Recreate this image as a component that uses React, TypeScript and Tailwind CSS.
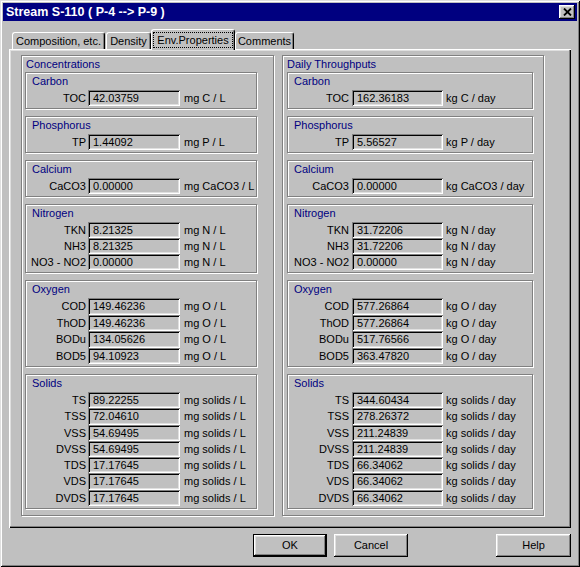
import React from "react";

type Row = { label: string; value: string };
type Section = { title: string; unit: string; rowH: string; rows: Row[] };

const raised =
	"shadow-[inset_-1px_-1px_0_#000,inset_1px_1px_0_#fff,inset_-2px_-2px_0_#808080,inset_2px_2px_0_#dfdfdf]";
const sunken =
	"shadow-[inset_1px_1px_0_#808080,inset_-1px_-1px_0_#fff,inset_2px_2px_0_#000,inset_-2px_-2px_0_#dfdfdf]";
const etched = "border border-[#808080] shadow-[inset_1px_1px_0_#fff,1px_1px_0_#fff]";

const concentrations: Section[] = [
	{ title: "Carbon", unit: "mg C / L", rowH: "h-[16px]", rows: [{ label: "TOC", value: "42.03759" }] },
	{ title: "Phosphorus", unit: "mg P / L", rowH: "h-[16px]", rows: [{ label: "TP", value: "1.44092" }] },
	{ title: "Calcium", unit: "mg CaCO3 / L", rowH: "h-[16px]", rows: [{ label: "CaCO3", value: "0.00000" }] },
	{
		title: "Nitrogen",
		unit: "mg N / L",
		rowH: "h-[16px]",
		rows: [
			{ label: "TKN", value: "8.21325" },
			{ label: "NH3", value: "8.21325" },
			{ label: "NO3 - NO2", value: "0.00000" },
		],
	},
	{
		title: "Oxygen",
		unit: "mg O / L",
		rowH: "h-[16.5px]",
		rows: [
			{ label: "COD", value: "149.46236" },
			{ label: "ThOD", value: "149.46236" },
			{ label: "BODu", value: "134.05626" },
			{ label: "BOD5", value: "94.10923" },
		],
	},
	{
		title: "Solids",
		unit: "mg solids / L",
		rowH: "h-[16.3px]",
		rows: [
			{ label: "TS", value: "89.22255" },
			{ label: "TSS", value: "72.04610" },
			{ label: "VSS", value: "54.69495" },
			{ label: "DVSS", value: "54.69495" },
			{ label: "TDS", value: "17.17645" },
			{ label: "VDS", value: "17.17645" },
			{ label: "DVDS", value: "17.17645" },
		],
	},
];

const throughputs: Section[] = [
	{ title: "Carbon", unit: "kg C / day", rowH: "h-[16px]", rows: [{ label: "TOC", value: "162.36183" }] },
	{ title: "Phosphorus", unit: "kg P / day", rowH: "h-[16px]", rows: [{ label: "TP", value: "5.56527" }] },
	{ title: "Calcium", unit: "kg CaCO3 / day", rowH: "h-[16px]", rows: [{ label: "CaCO3", value: "0.00000" }] },
	{
		title: "Nitrogen",
		unit: "kg N / day",
		rowH: "h-[16px]",
		rows: [
			{ label: "TKN", value: "31.72206" },
			{ label: "NH3", value: "31.72206" },
			{ label: "NO3 - NO2", value: "0.00000" },
		],
	},
	{
		title: "Oxygen",
		unit: "kg O / day",
		rowH: "h-[16.5px]",
		rows: [
			{ label: "COD", value: "577.26864" },
			{ label: "ThOD", value: "577.26864" },
			{ label: "BODu", value: "517.76566" },
			{ label: "BOD5", value: "363.47820" },
		],
	},
	{
		title: "Solids",
		unit: "kg solids / day",
		rowH: "h-[16.3px]",
		rows: [
			{ label: "TS", value: "344.60434" },
			{ label: "TSS", value: "278.26372" },
			{ label: "VSS", value: "211.24839" },
			{ label: "DVSS", value: "211.24839" },
			{ label: "TDS", value: "66.34062" },
			{ label: "VDS", value: "66.34062" },
			{ label: "DVDS", value: "66.34062" },
		],
	},
];

interface Layout {
	outer: string;
	inner: string;
	label: string;
	input: string;
	unit: string;
}

const leftLayout: Layout = {
	outer: "w-[253px]",
	inner: "ml-[3px] w-[232px]",
	label: "w-[60px]",
	input: "ml-[2px] w-[92px]",
	unit: "ml-[4px]",
};

const rightLayout: Layout = {
	outer: "w-[262px]",
	inner: "ml-[4px] w-[246px]",
	label: "w-[61px]",
	input: "ml-[3px] w-[91px]",
	unit: "ml-[3px]",
};

function GroupBox({ title, sections, layout }: { title: string; sections: Section[]; layout: Layout }) {
	return (
		<div className={`${etched} ${layout.outer} h-[461px]`}>
			<div className="box-content h-[13px] pl-[4px] pt-[2px] leading-[13px] text-[#000080]">{title}</div>
			<div className={`mt-[1px] flex flex-col gap-[7px] ${layout.inner}`}>
				{sections.map((s) => (
					<div key={s.title} className={`${etched} pb-[2px] pt-[2px]`}>
						<div className="h-[13px] pl-[6px] leading-[13px] text-[#000080]">{s.title}</div>
						<div className="mt-[2px]">
							{s.rows.map((r) => (
								<div key={r.label} className={`flex items-center ${s.rowH}`}>
									<div className={`${layout.label} text-right`}>{r.label}</div>
									<div className={`${layout.input} ${sunken} flex h-full items-center pl-[5px]`}>
										{r.value}
									</div>
									<div className={layout.unit}>{s.unit}</div>
								</div>
							))}
						</div>
					</div>
				))}
			</div>
		</div>
	);
}

function CloseGlyph() {
	return (
		<svg width="9" height="8" viewBox="0 0 9 8" className="block">
			<path d="M1 0.5 L8 7.5 M8 0.5 L1 7.5" stroke="#000" strokeWidth="1.8" fill="none" />
		</svg>
	);
}

function Tab({ label, width, active }: { label: string; width: string; active?: boolean }) {
	if (active) {
		return (
			<div
				className={`${width} relative z-10 -mb-[1px] flex h-[21px] items-start justify-center rounded-t-[3px] border-l border-t border-r border-white border-r-black bg-[#c0c0c0] pt-[2px] shadow-[inset_-1px_0_0_#808080]`}
			>
				<span className="border border-dotted border-black px-[3px] leading-[14px]">{label}</span>
			</div>
		);
	}
	return (
		<div
			className={`${width} flex h-[17px] items-center justify-center rounded-t-[3px] border-l border-t border-r border-white border-r-black bg-[#c0c0c0] pt-[1px] shadow-[inset_-1px_0_0_#808080]`}
		>
			{label}
		</div>
	);
}

function Button({ label, width, isDefault }: { label: string; width: string; isDefault?: boolean }) {
	if (isDefault) {
		return (
			<div className={`${width} h-[23px] border border-black`}>
				<div className={`flex h-full w-full items-center justify-center ${raised}`}>{label}</div>
			</div>
		);
	}
	return <div className={`${width} flex h-[23px] items-center justify-center ${raised}`}>{label}</div>;
}

export default function App() {
	return (
		<div
			className={`h-[567px] w-[580px] bg-[#c0c0c0] p-[3px] font-['Liberation_Sans',Arial,sans-serif] text-[11px] text-black shadow-[inset_1px_1px_0_#dfdfdf,inset_-1px_-1px_0_#000,inset_2px_2px_0_#fff,inset_-2px_-2px_0_#808080]`}
		>
			{/* Title bar */}
			<div className="flex h-[18px] items-center justify-between bg-[#000080] pl-[3px] pr-[2px]">
				<span className="text-[12.5px] font-bold text-white">Stream S-110 ( P-4 --&gt; P-9 )</span>
				<div className={`flex h-[14px] w-[16px] items-center justify-center bg-[#c0c0c0] ${raised}`}>
					<CloseGlyph />
				</div>
			</div>

			{/* Tabs */}
			<div className="mt-[8px] flex h-[20px] items-end pl-[9px]">
				<Tab label="Composition, etc." width="w-[93px]" />
				<div className="w-[1px]" />
				<Tab label="Density" width="w-[45px]" />
				<Tab label="Env.Properties" width="w-[84px]" active />
				<Tab label="Comments" width="w-[59px]" />
			</div>

			{/* Tab panel */}
			<div className="mx-[6px] flex h-[479px] gap-[8px] pl-[12px] pt-[6px] shadow-[inset_1px_1px_0_#fff,inset_-1px_-1px_0_#000,inset_-2px_-2px_0_#808080,inset_2px_2px_0_#dfdfdf]">
				<GroupBox title="Concentrations" sections={concentrations} layout={leftLayout} />
				<GroupBox title="Daily Throughputs" sections={throughputs} layout={rightLayout} />
			</div>

			{/* Buttons */}
			<div className="mx-[6px] mt-[6px] flex justify-end">
				<Button label="OK" width="w-[74px]" isDefault />
				<div className="w-[7px]" />
				<Button label="Cancel" width="w-[74px]" />
				<div className="w-[88px]" />
				<Button label="Help" width="w-[75px]" />
			</div>
		</div>
	);
}
